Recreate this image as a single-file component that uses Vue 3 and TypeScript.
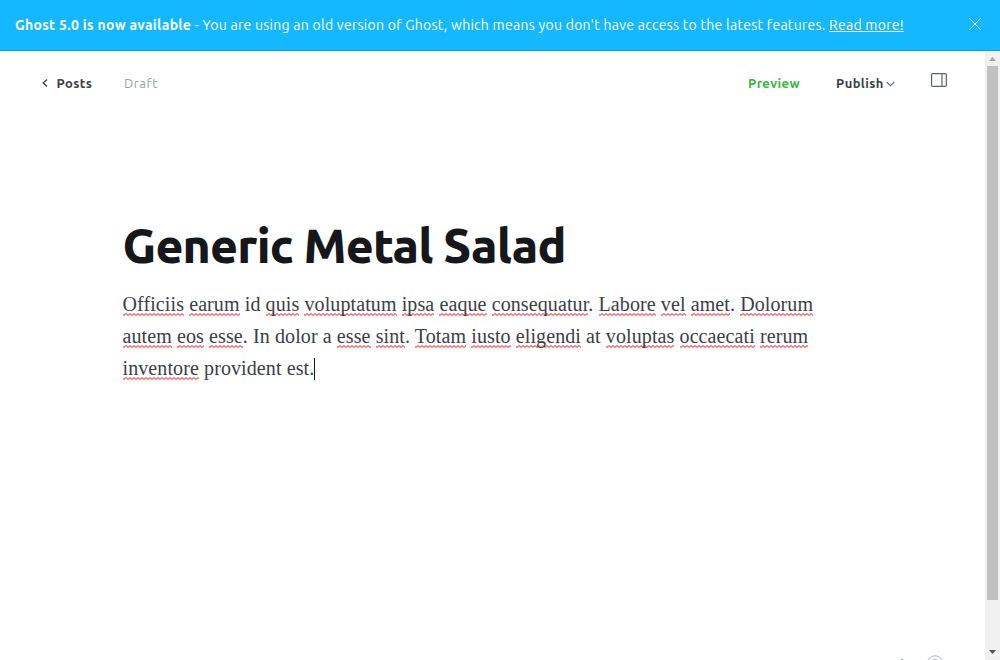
<script setup lang="ts">
interface Token {
  text: string
  misspelled: boolean
}

// Words wrapped in brackets are flagged by the spell checker.
const lines: string[] = [
  '[Officiis] [earum] id [quis] [voluptatum] [ipsa] [eaque] [consequatur]. [Labore] [vel] [amet]. [Dolorum]',
  '[autem] [eos] [esse]. In dolor a [esse] [sint]. [Totam] [iusto] [eligendi] at [voluptas] [occaecati] [rerum]',
  '[inventore] provident est.',
]

function tokenize(line: string): Token[] {
  return line
    .split(/(\[\w+\])/)
    .filter((part) => part !== '')
    .map((part) => ({ text: part.replace(/[[\]]/g, ''), misspelled: part.startsWith('[') }))
}

const paragraph: Token[][] = lines.map(tokenize)
</script>

<template>
  <div class="app">
    <aside class="banner">
      <p class="message">
        <strong>Ghost 5.0 is now available</strong><span class="rest"> - You are using an old version of Ghost, which means you don't have access to the latest features. </span><a class="more">Read more!</a>
      </p>
      <svg class="close" width="14" height="14" viewBox="0 0 14 14"><path d="M1 1l12 12M13 1L1 13" /></svg>
    </aside>
    <div class="view">
      <main class="editor">
        <header class="toolbar">
          <svg class="back" width="6" height="8" viewBox="0 0 6 8"><path d="M5 .5L1.2 4 5 7.5" /></svg>
          <span class="posts">Posts</span>
          <span class="draft">Draft</span>
          <span class="preview">Preview</span>
          <span class="publish">Publish</span>
          <svg class="chevron" width="9" height="6" viewBox="0 0 9 6"><path d="M.7 1L4.5 4.7 8.3 1" /></svg>
          <svg class="panel" width="16" height="14" viewBox="0 0 16 14"><rect x=".6" y=".6" width="14.8" height="12.8" rx="1.2" /><path d="M11 .6v12.8" /></svg>
        </header>
        <article class="post">
          <h1><span>Generic Metal Salad</span></h1>
          <p class="body">
            <span v-for="(tokens, i) in paragraph" :key="i" class="line"><span v-for="(token, j) in tokens" :key="j" :class="{ misspelled: token.misspelled }">{{ token.text }}</span><i v-if="i === paragraph.length - 1" class="caret"></i></span>
          </p>
        </article>
        <footer class="status">
          <i class="tick"></i>
          <svg width="18" height="18" viewBox="0 0 18 18"><circle cx="9" cy="9" r="8.2" /><path d="M6.5 5.2q2.5-2 5 0" /></svg>
        </footer>
      </main>
      <div class="scrollbar">
        <svg width="15" height="15" viewBox="0 0 15 15"><path d="M4 10h7L7.5 6z" fill="#a3a3a3" /></svg>
        <div class="thumb"></div>
        <svg class="down" width="15" height="15" viewBox="0 0 15 15"><path d="M4 5h7L7.5 9z" fill="#505050" /></svg>
      </div>
    </div>
  </div>
</template>

<style scoped>
.app {
  display: flex;
  flex-direction: column;
  width: 1000px;
  height: 660px;
  overflow: hidden;
  background: #fff;
  font-family: Ubuntu, "Noto Sans", sans-serif;
}
.banner {
  display: flex;
  box-sizing: border-box;
  height: 51px;
  flex: none;
  justify-content: space-between;
  padding: 14px 18px 0 15px;
  border-bottom: 1px solid #0a9fe4;
  background: #14b8ff;
  color: #fff;
}
.message {
  margin: 0;
  font-size: 14px;
  letter-spacing: 0.27px;
  line-height: 22px;
  white-space: pre;
}
.message strong {
  letter-spacing: 0.3px;
}
.more {
  text-decoration: underline;
}
.close {
  margin-top: 3px;
  fill: none;
  stroke: #fff;
  stroke-width: 0.8;
}
.view {
  display: flex;
  flex: 1;
  min-height: 0;
}
.editor {
  display: flex;
  flex: 1;
  flex-direction: column;
  overflow: hidden;
}
.toolbar {
  display: flex;
  height: 64px;
  align-items: center;
  padding-left: 41.5px;
  color: #394047;
  font-size: 13px;
  font-weight: 600;
  letter-spacing: 0.4px;
  white-space: nowrap;
}
.toolbar svg {
  flex: none;
  fill: none;
  stroke: #394047;
}
.toolbar .back {
  stroke-width: 1.3;
}
.posts {
  width: 67.5px;
  margin-left: 9px;
}
.draft {
  width: 624px;
  color: #95a1ad;
  font-weight: 400;
  letter-spacing: 0.6px;
}
.preview {
  width: 88px;
  color: #30b93c;
}
.publish {
  width: 50px;
}
.toolbar .chevron {
  margin-top: 2px;
  stroke: #6b7177;
  stroke-width: 1.2;
}
.panel {
  margin: -6px 0 0 36px;
}
.toolbar .panel {
  stroke: #5d646b;
  stroke-width: 1.2;
}
.post {
  width: 740px;
  padding: 98px 0 0 122.5px;
}
h1 {
  height: 66px;
  margin: 0;
  color: #15171a;
  font-size: 48px;
  font-weight: 800;
  letter-spacing: -0.82px;
  line-height: 64px;
  white-space: nowrap;
}
.body {
  margin: 9px 0 0;
  color: #394047;
  font-family: "Liberation Serif", serif;
  font-size: 20px;
  letter-spacing: 0.1px;
  line-height: 32px;
}
.line {
  display: block;
  white-space: pre;
}
.misspelled {
  padding-bottom: 1px;
  background: url("data:image/svg+xml,%3Csvg xmlns='http://www.w3.org/2000/svg' width='4' height='3'%3E%3Cpath d='M-1 .5L1 2.5L3 .5L5 2.5' fill='none' stroke='red'/%3E%3C/svg%3E") repeat-x left bottom;
}
.caret {
  display: inline-block;
  width: 1px;
  height: 22px;
  background: #15171a;
  vertical-align: -5px;
}
.status {
  display: flex;
  height: 5px;
  align-items: flex-start;
  justify-content: flex-end;
  margin-top: auto;
  padding-right: 41px;
}
.status svg {
  flex: none;
  fill: none;
  stroke: #abb4be;
}
.tick {
  width: 2px;
  height: 1px;
  margin: 4px 23px 0 0;
  background: #95a1ad;
}
.scrollbar {
  display: flex;
  width: 15px;
  flex-direction: column;
  background: #f1f1f1;
}
.thumb {
  width: 11px;
  height: 534px;
  margin-left: 2px;
  background: #c1c1c1;
}
.down {
  margin-top: auto;
}
</style>
